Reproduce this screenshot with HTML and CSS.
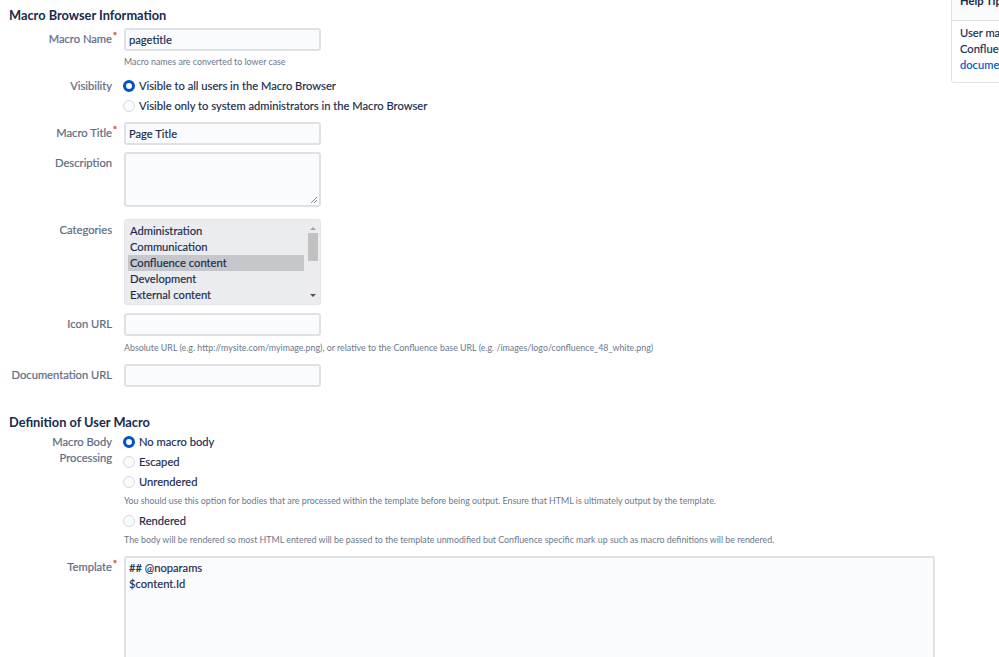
FILE: index.html
```html
<!DOCTYPE html>
<html>
<head>
<meta charset="utf-8">
<link rel="stylesheet" href="styles.css">
</head>
<body>
<div class="page">
  <main class="main">
    <h2 class="heading h-first">Macro Browser Information</h2>

    <div class="field f-name">
      <div class="label">Macro Name<span class="req">*</span></div>
      <div class="content">
        <div class="input">pagetitle</div>
        <div class="hint h-name">Macro names are converted to lower case</div>
      </div>
    </div>

    <div class="field f-vis">
      <div class="label lbl-radio">Visibility</div>
      <div class="content">
        <div class="radio-row"><span class="radio checked"></span>Visible to all users in the Macro Browser</div>
        <div class="radio-row"><span class="radio"></span>Visible only to system administrators in the Macro Browser</div>
      </div>
    </div>

    <div class="field f-title">
      <div class="label">Macro Title<span class="req">*</span></div>
      <div class="content">
        <div class="input">Page Title</div>
      </div>
    </div>

    <div class="field f-desc">
      <div class="label">Description</div>
      <div class="content">
        <div class="input textarea">
          <svg class="grip" width="8" height="8" viewBox="0 0 8 8"><path d="M7 1L1 7M7 4L4 7" stroke="#8c8c8c" stroke-width="1"/></svg>
        </div>
      </div>
    </div>

    <div class="field f-cat">
      <div class="label lbl-cat">Categories</div>
      <div class="content">
        <div class="select">
          <div class="options">
            <div class="opt">Administration</div>
            <div class="opt">Communication</div>
            <div class="opt sel">Confluence content</div>
            <div class="opt">Development</div>
            <div class="opt">External content</div>
          </div>
          <div class="scroll">
            <span class="arr up"></span>
            <span class="thumb"></span>
            <span class="arr down"></span>
          </div>
        </div>
      </div>
    </div>

    <div class="field f-icon">
      <div class="label">Icon URL</div>
      <div class="content">
        <div class="input"></div>
        <div class="hint h-icon">Absolute URL (e.g. http://mysite.com/myimage.png), or relative to the Confluence base URL (e.g. /images/logo/confluence_48_white.png)</div>
      </div>
    </div>

    <div class="field f-doc">
      <div class="label">Documentation URL</div>
      <div class="content">
        <div class="input"></div>
      </div>
    </div>

    <h2 class="heading h-second">Definition of User Macro</h2>

    <div class="field f-body">
      <div class="label lbl-body">Macro Body<br>Processing</div>
      <div class="content">
        <div class="radio-row"><span class="radio checked"></span>No macro body</div>
        <div class="radio-row"><span class="radio"></span>Escaped</div>
        <div class="radio-row"><span class="radio"></span>Unrendered</div>
        <div class="hint h-radio">You should use this option for bodies that are processed within the template before being output. Ensure that HTML is ultimately output by the template.</div>
        <div class="radio-row"><span class="radio"></span>Rendered</div>
        <div class="hint h-radio">The body will be rendered so most HTML entered will be passed to the template unmodified but Confluence specific mark up such as macro definitions will be rendered.</div>
      </div>
    </div>

    <div class="field f-tpl">
      <div class="label lbl-tpl">Template<span class="req">*</span></div>
      <div class="content">
        <div class="input template">## @noparams<br>$content.Id</div>
      </div>
    </div>
  </main>

  <aside class="help">
    <div class="help-head">Help Tip</div>
    <div class="help-body">User macros allow you to create simple formatting<br>Confluence page editor macros. See the<br><a href="#" class="link">documentation</a> for more information.</div>
  </aside>
</div>
</body>
</html>
```

FILE: styles.css
```css
html, body {
  margin: 0;
  padding: 0;
  background: #ffffff;
  overflow: hidden;
}
body {
  font-family: Lato, "Open Sans", sans-serif;
  font-size: 11.2px;
  color: #172b4d;
  width: 999px;
  height: 657px;
}
.page {
  display: flex;
  align-items: flex-start;
}
.main {
  flex: 0 0 951px;
  width: 951px;
}
.heading {
  margin: 0;
  padding-left: 9px;
  font-size: 12.8px;
  font-weight: 700;
  line-height: 20px;
  color: #172b4d;
}
.h-first { margin-top: 5px; }
.h-second { margin-top: 25px; }

.field {
  display: grid;
  grid-template-columns: 112px 810px;
  column-gap: 12px;
}
.label {
  text-align: right;
  color: #5e6c84;
  font-weight: 400;
  line-height: 16px;
  padding-top: 3px;
  white-space: nowrap;
  -webkit-text-stroke: 0.2px #5e6c84;
}
.req {
  color: #e5493a;
  font-size: 9.5px;
  vertical-align: top;
  line-height: 10px;
  margin-right: -5px;
  margin-left: 1px;
  -webkit-text-stroke: 0.3px #e5493a;
}
.lbl-radio { padding-top: 2px; }
.lbl-cat { padding-top: 3px; }
.lbl-body { padding-top: 2px; }
.lbl-tpl { padding-top: 3px; }

.content { min-width: 0; }

.input {
  box-sizing: border-box;
  width: 197px;
  height: 23px;
  background: #fafbfc;
  border: 2px solid #dfe1e6;
  border-radius: 3px;
  padding: 0 3px;
  line-height: 19px;
  color: #172b4d;
  -webkit-text-stroke: 0.15px #172b4d;
}
.textarea {
  height: 55px;
  display: flex;
  align-items: flex-end;
  justify-content: flex-end;
  padding: 0 1px 1px 0;
}
.grip { display: block; }

.hint {
  font-size: 8.85px;
  line-height: 12px;
  color: #6b778c;
  white-space: nowrap;
}
.h-name { margin-top: 5px; }
.h-icon { margin-top: 6px; }
.h-radio { margin-top: 3px; margin-bottom: 4px; }

.f-name { margin-top: 3px; }
.f-vis { margin-top: 8px; }
.f-title { margin-top: 6px; }
.f-desc { margin-top: 7px; }
.f-cat { margin-top: 12px; }
.f-icon { margin-top: 8px; }
.f-doc { margin-top: 10px; }
.f-body { margin-top: 0; }
.f-tpl { margin-top: 6px; }

.radio-row {
  display: flex;
  align-items: center;
  height: 20px;
  line-height: 20px;
  white-space: nowrap;
  -webkit-text-stroke: 0.15px #172b4d;
}
.radio {
  box-sizing: border-box;
  width: 12px;
  height: 12px;
  border-radius: 50%;
  border: 1.5px solid #d5d8de;
  background: #fafbfc;
  margin-left: -1px;
  margin-right: 4px;
  flex: 0 0 auto;
}
.radio.checked {
  border: 3.5px solid #0052cc;
  background: #ffffff;
}

.select {
  box-sizing: border-box;
  width: 197px;
  height: 86px;
  background: #ebecf0;
  border: 1px solid #e4e5ea;
  border-radius: 3px;
  display: flex;
  padding: 2px 1px 2px 3px;
}
.options {
  flex: 1 1 auto;
  padding-top: 1px;
}
.opt {
  height: 16px;
  line-height: 16px;
  padding-left: 2px;
  margin-right: 2px;
  color: #172b4d;
  -webkit-text-stroke: 0.15px #172b4d;
}
.opt.sel { background: #c6c7cb; }
.scroll {
  flex: 0 0 13px;
  display: flex;
  flex-direction: column;
  align-items: center;
  background: #ececef;
}
.arr {
  width: 0;
  height: 0;
  border-left: 3px solid transparent;
  border-right: 3px solid transparent;
}
.arr.up { border-bottom: 3px solid #a3a3a3; margin-top: 5px; }
.arr.down { border-top: 3px solid #505050; margin-top: 33px; }
.thumb {
  width: 10px;
  height: 28px;
  background: #c1c1c1;
  margin-top: 3px;
}

.template {
  width: 811px;
  height: 140px;
  padding: 2px 3px;
  line-height: 16px;
}

.help {
  flex: 0 0 260px;
  margin-top: -14px;
  box-sizing: border-box;
  border: 1px solid #dfe1e6;
  border-radius: 3px;
  background: #ffffff;
}
.help-head {
  font-weight: 700;
  line-height: 20px;
  padding: 4px 8px 9px;
  background: #fafbfc;
  border-bottom: 1px solid #dfe1e6;
  white-space: nowrap;
}
.help-body {
  padding: 4px 8px 9px;
  line-height: 16px;
  white-space: nowrap;
  -webkit-text-stroke: 0.15px #172b4d;
}
.link { color: #0052cc; text-decoration: none; -webkit-text-stroke: 0.15px #0052cc; }
```
